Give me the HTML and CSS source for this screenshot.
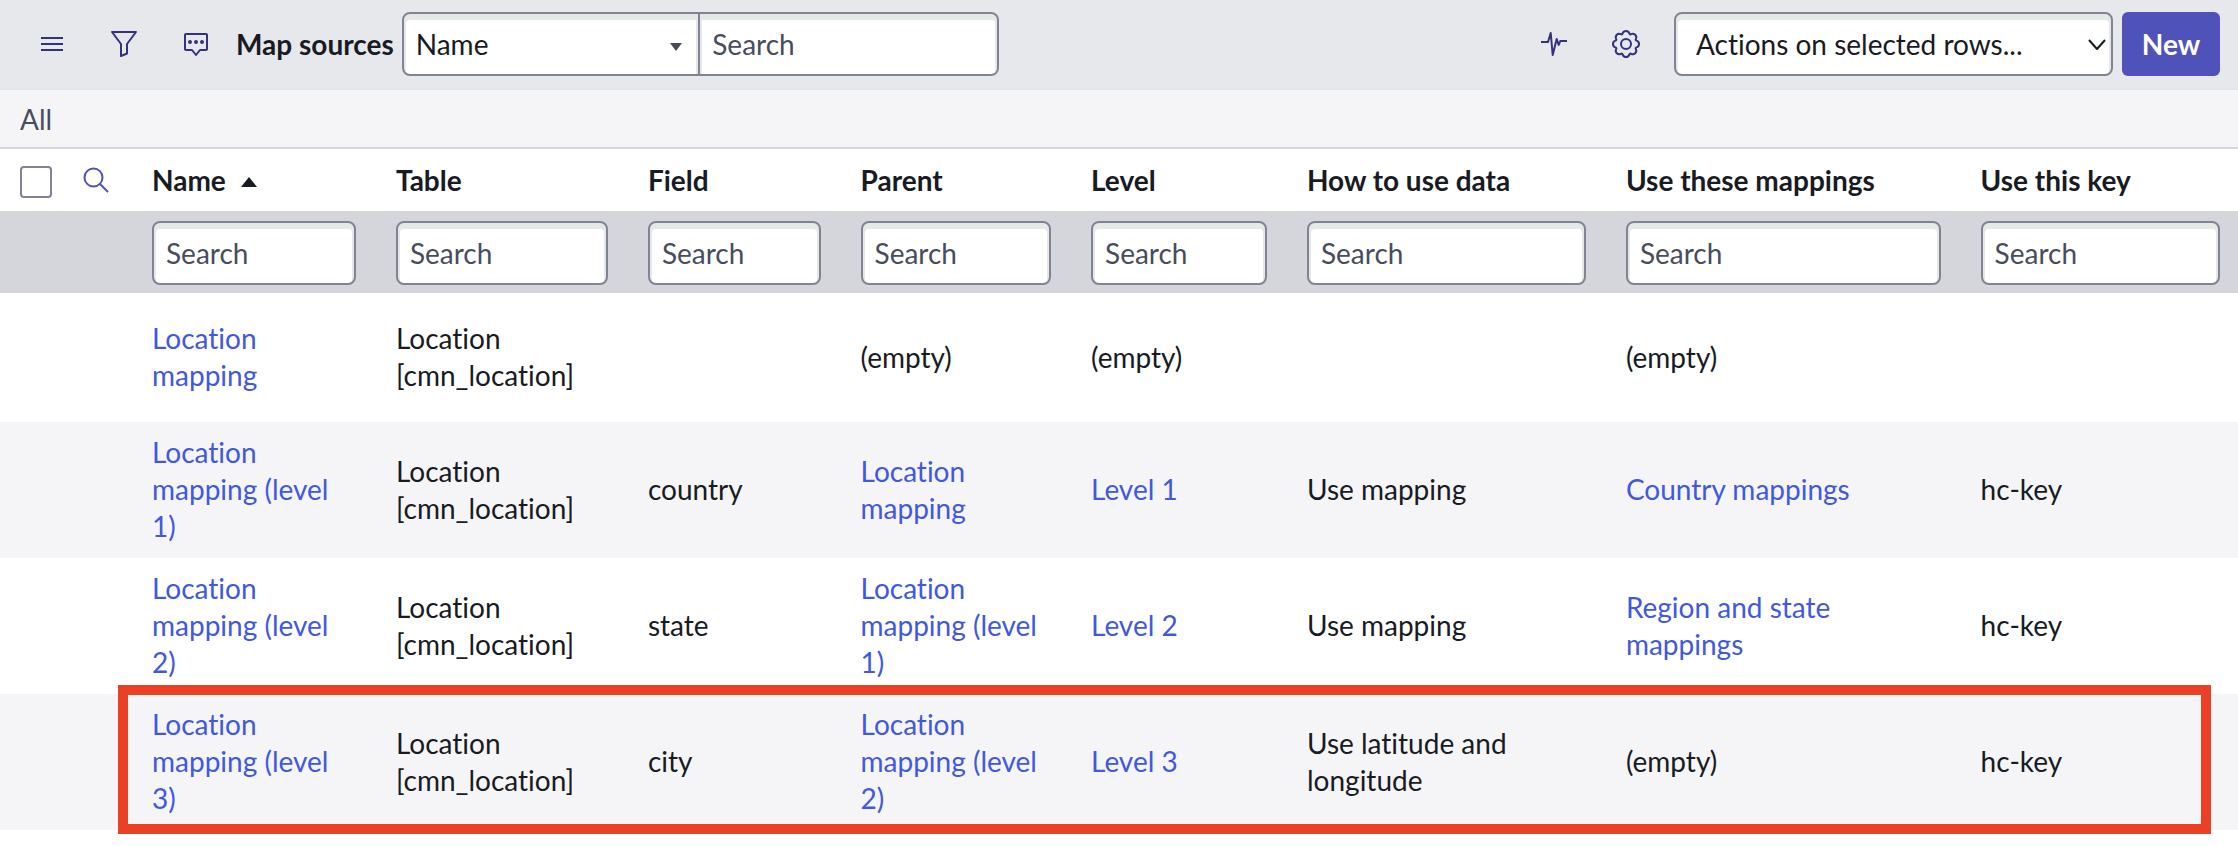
FILE: index.html
```html
<!DOCTYPE html>
<html lang="en">
	<head>
		<meta charset="UTF-8" />
		<meta name="viewport" content="width=device-width, initial-scale=1.0" />
		<title>Map sources</title>

		<link rel="stylesheet" href="styles.css">
	</head>
	<body>
		<header class="toolbar">
			<button type="button" class="icon-button" aria-label="Menu">
				<svg width="32" height="32" viewBox="0 0 32 32">
					<path d="M5 10h22M5 16h22M5 22h22" />
				</svg>
			</button>
			<button type="button" class="icon-button" aria-label="Filter">
				<svg width="32" height="32" viewBox="0 0 32 32">
					<path d="M4 4h24l-9 12v9.500l-6 2.500v-12z" />
				</svg>
			</button>
			<button type="button" class="icon-button" aria-label="Comments">
				<svg width="32" height="32" viewBox="0 0 32 32">
					<path d="M6 6h20q1 0 1 1v14q0 1-1 1h-6l-4 5-4-5h-6q-1 0-1-1v-14q0-1 1-1z" />
					<g class="dots">
						<circle cx="10" cy="14" r="2" />
						<circle cx="16" cy="14" r="2" />
						<circle cx="22" cy="14" r="2" />
					</g>
				</svg>
			</button>
			<h1>Map sources</h1>
			<form class="search-group">
				<div class="select-box field-select">
					<select id="searchField" class="control" aria-label="Search field">
						<option>Name</option>
						<option>Table</option>
						<option>Field</option>
					</select>
					<svg class="caret" width="12" height="8" viewBox="0 0 12 8">
						<path d="M0 0h12l-6 8z" />
					</svg>
				</div>
				<input type="text" class="control" placeholder="Search" aria-label="Search" />
			</form>
			<div class="toolbar-right">
				<button type="button" class="icon-button" aria-label="Activity">
					<svg width="32" height="32" viewBox="0 0 32 32">
						<path d="M3 14h7l2.700-9 2 22 4-16 2 6 1.600-4H29" />
					</svg>
				</button>
				<button type="button" class="icon-button" aria-label="Settings">
					<svg width="32" height="32" viewBox="0 0 32 32">
						<circle cx="16" cy="16" r="5" />
						<path d="M12.600 5.400A3.600 3.600 0 0 1 19.400 5.400A1 1 0 0 0 21.100 6.100A3.600 3.600 0 0 1 25.900 10.900A1 1 0 0 0 26.600 12.600A3.600 3.600 0 0 1 26.600 19.400A1 1 0 0 0 25.900 21.100A3.600 3.600 0 0 1 21.100 25.900A1 1 0 0 0 19.400 26.600A3.600 3.600 0 0 1 12.600 26.600A1 1 0 0 0 10.900 25.900A3.600 3.600 0 0 1 6.100 21.100A1 1 0 0 0 5.400 19.400A3.600 3.600 0 0 1 5.400 12.600A1 1 0 0 0 6.100 10.900A3.600 3.600 0 0 1 10.900 6.100A1 1 0 0 0 12.600 5.400Z" />
					</svg>
				</button>
				<div class="select-box actions-select">
					<select id="actions" class="control" aria-label="Actions on selected rows">
						<option>Actions on selected rows...</option>
						<option>Delete</option>
					</select>
					<svg class="chevron" width="18" height="12" viewBox="0 0 18 12">
						<path d="M1 1l8 9 8-9" />
					</svg>
				</div>
				<button type="button" class="new-button">New</button>
			</div>
		</header>

		<nav class="breadcrumb">
			<a href="#">All</a>
		</nav>

		<div class="list-wrap">
			<table class="list">
				<colgroup>
					<col class="col-check" />
					<col class="col-icon" />
					<col class="col-name" />
					<col class="col-table" />
					<col class="col-field" />
					<col class="col-parent" />
					<col class="col-level" />
					<col class="col-use" />
					<col class="col-mappings" />
					<col class="col-key" />
				</colgroup>
				<thead>
					<tr class="headings">
						<th class="check-cell">
							<input type="checkbox" class="checkbox" aria-label="Select all" />
						</th>
						<th class="icon-cell">
							<button type="button" class="search-button" aria-label="Show column search">
								<svg width="26" height="26" viewBox="0 0 26 26">
									<circle cx="10.500" cy="10.500" r="9" />
									<path d="M17 17l8 8" />
								</svg>
							</button>
						</th>
						<th>
							Name
							<svg class="sort" width="16" height="10" viewBox="0 0 16 10">
								<path d="M8 0l8 10h-16z" />
							</svg>
						</th>
						<th>Table</th>
						<th>Field</th>
						<th>Parent</th>
						<th>Level</th>
						<th>How to use data</th>
						<th>Use these mappings</th>
						<th>Use this key</th>
					</tr>
					<tr class="filters">
						<td></td>
						<td></td>
						<td><input type="text" class="control" placeholder="Search" aria-label="Search name" /></td>
						<td><input type="text" class="control" placeholder="Search" aria-label="Search table" /></td>
						<td><input type="text" class="control" placeholder="Search" aria-label="Search field" /></td>
						<td><input type="text" class="control" placeholder="Search" aria-label="Search parent" /></td>
						<td><input type="text" class="control" placeholder="Search" aria-label="Search level" /></td>
						<td><input type="text" class="control" placeholder="Search" aria-label="Search how to use data" /></td>
						<td><input type="text" class="control" placeholder="Search" aria-label="Search use these mappings" /></td>
						<td><input type="text" class="control" placeholder="Search" aria-label="Search use this key" /></td>
					</tr>
				</thead>
				<tbody>
					<tr class="short">
						<td></td>
						<td></td>
						<td><a href="#">Location mapping</a></td>
						<td>Location [cmn_location]</td>
						<td></td>
						<td>(empty)</td>
						<td>(empty)</td>
						<td></td>
						<td>(empty)</td>
						<td></td>
					</tr>
					<tr>
						<td></td>
						<td></td>
						<td><a href="#">Location mapping (level 1)</a></td>
						<td>Location [cmn_location]</td>
						<td>country</td>
						<td><a href="#">Location mapping</a></td>
						<td><a href="#">Level 1</a></td>
						<td>Use mapping</td>
						<td><a href="#">Country mappings</a></td>
						<td>hc-key</td>
					</tr>
					<tr>
						<td></td>
						<td></td>
						<td><a href="#">Location mapping (level 2)</a></td>
						<td>Location [cmn_location]</td>
						<td>state</td>
						<td><a href="#">Location mapping (level 1)</a></td>
						<td><a href="#">Level 2</a></td>
						<td>Use mapping</td>
						<td><a href="#">Region and state mappings</a></td>
						<td>hc-key</td>
					</tr>
					<tr>
						<td></td>
						<td></td>
						<td><a href="#">Location mapping (level 3)</a></td>
						<td>Location [cmn_location]</td>
						<td>city</td>
						<td><a href="#">Location mapping (level 2)</a></td>
						<td><a href="#">Level 3</a></td>
						<td>Use latitude and longitude</td>
						<td>(empty)</td>
						<td>hc-key</td>
					</tr>
				</tbody>
			</table>
			<div class="marker"></div>
		</div>
	</body>
</html>
```

FILE: styles.css
```css
* {
	box-sizing: border-box;
}

body {
	min-height: 100vh;
	margin: 0;
	background-color: #fff;
	color: #181b23;
	font-family: Lato, "Liberation Sans", sans-serif;
	font-size: 28px;
	font-variant-ligatures: none;
	line-height: 38px;
}

a {
	color: #4158e0;
	text-decoration: none;
}

button,
input,
select {
	font: inherit;
}

button {
	padding: 0;
	border: none;
	background: none;
	cursor: pointer;
}

svg {
	fill: none;
	stroke: #32327e;
	stroke-width: 2;
	stroke-linejoin: round;
}

/* toolbar */
.toolbar {
	display: flex;
	align-items: center;
	padding: 12px 18px 12px 16px;
	border-bottom: 2px solid #e3e4e9;
	background-color: #e7e8ec;
}

.toolbar h1 {
	margin: 0 8px 0 4px;
	font-size: 28px;
	font-weight: 700;
}

.icon-button {
	display: flex;
	justify-content: center;
	width: 72px;
}

.dots {
	fill: #32327e;
	stroke: none;
}

.control {
	width: 100%;
	height: 64px;
	padding: 0 12px;
	border: 2px solid #7f8393;
	border-radius: 8px;
	background-color: #fff;
	box-shadow: inset 0 4px 0 2px #e5e8e8;
	color: #181b23;
	font-variant-ligatures: none;
	appearance: none;
}

.control::placeholder {
	color: #484d5e;
	opacity: 1;
}

.search-group {
	display: grid;
	grid-template-columns: 1fr 1fr;
	width: 597px;
}

.field-select .control {
	border-radius: 8px 0 0 8px;
}

.search-group > .control {
	border-left: none;
	border-radius: 0 8px 8px 0;
}

.select-box {
	position: relative;
}

.select-box svg {
	position: absolute;
	pointer-events: none;
}

.caret {
	top: 31px;
	right: 18px;
	fill: #464b5c;
	stroke: none;
}

.toolbar-right {
	display: flex;
	align-items: center;
	margin-left: auto;
}

.actions-select {
	width: 439px;
	margin: 0 9px 0 12px;
}

.actions-select .control {
	padding: 0 20px;
}

.chevron {
	top: 27px;
	right: 7px;
	stroke: #181b23;
}

.new-button {
	width: 98px;
	height: 64px;
	border-radius: 6px;
	background-color: #4f52b8;
	color: #fff;
	font-weight: 700;
}

/* breadcrumb */
.breadcrumb {
	padding: 10px 20px 9px;
	border-bottom: 2px solid #d5d6dd;
	background-color: #f5f5f8;
}

.breadcrumb a {
	color: #484d5e;
}

/* list */
.list-wrap {
	position: relative;
}

.list {
	width: 100%;
	table-layout: fixed;
	border-collapse: collapse;
}

.col-check {
	width: 74px;
}

.col-icon {
	width: 58px;
}

.col-name {
	width: 10.9%;
}

.col-table {
	width: 11.26%;
}

.col-field {
	width: 9.5%;
}

.col-parent {
	width: 10.3%;
}

.col-level {
	width: 9.65%;
}

.col-use {
	width: 14.25%;
}

.col-mappings {
	width: 15.85%;
}

.list th,
.list td {
	padding: 0 20px;
	text-align: left;
	vertical-align: middle;
}

.list th {
	height: 62px;
	font-weight: 700;
}

.list .icon-cell {
	padding: 0 9px;
}

.checkbox {
	display: block;
	width: 32px;
	height: 32px;
	margin: 4px 0 0;
	border: 2px solid #7f8393;
	border-radius: 4px;
	background-color: #fff;
	appearance: none;
}

.search-button {
	display: block;
}

.search-button svg {
	display: block;
	stroke: #4f52b8;
}

.sort {
	margin-left: 8px;
	vertical-align: 4px;
	fill: #181b23;
	stroke: none;
}

.filters {
	background-color: #d5d6dc;
}

.list .filters td {
	padding-top: 10px;
	padding-bottom: 8px;
}

.filters .control {
	display: block;
}

.list th:last-child,
.list td:last-child {
	padding-right: 18px;
}

.list tbody tr {
	height: 136px;
	line-height: 37px;
}

.list tbody td {
	padding-bottom: 1px;
}

.list tbody .short {
	height: 129px;
}

.list tbody tr:nth-child(even) {
	background-color: #f5f5f8;
}

/* box round the last row */
.marker {
	position: absolute;
	right: 27px;
	bottom: -4px;
	left: 118px;
	height: 149px;
	border: 10px solid #ea4025;
	pointer-events: none;
}
```
